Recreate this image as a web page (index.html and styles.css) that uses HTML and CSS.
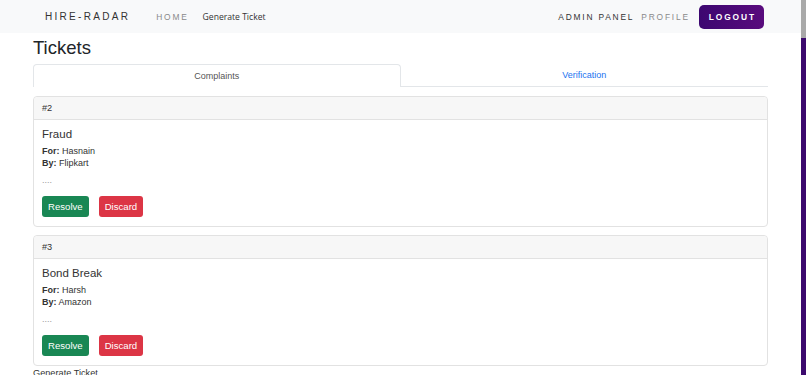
FILE: index.html
```html
<!DOCTYPE html>
<html lang="en">
<head>
<meta charset="utf-8">
<title>Hire-Radar Tickets</title>
<link rel="stylesheet" href="styles.css">
</head>
<body>
<div class="page">
  <nav class="navbar">
    <div class="nav-left">
      <span class="brand">HIRE-RADAR</span>
      <a class="nav-link muted">HOME</a>
      <a class="plain-link">Generate Ticket</a>
    </div>
    <div class="nav-right">
      <a class="nav-link">ADMIN PANEL</a>
      <a class="nav-link muted">PROFILE</a>
      <button class="logout">LOGOUT</button>
    </div>
  </nav>
  <main class="container">
    <h2 class="page-title">Tickets</h2>
    <div class="tabs">
      <div class="tab active">Complaints</div>
      <div class="tab">Verification</div>
    </div>
    <div class="card">
      <div class="card-header">#2</div>
      <div class="card-body">
        <h5 class="card-title">Fraud</h5>
        <p class="meta"><b>For:</b> Hasnain<br><b>By:</b> Flipkart</p>
        <p class="desc">....</p>
        <div class="actions">
          <button class="btn btn-green">Resolve</button>
          <button class="btn btn-red">Discard</button>
        </div>
      </div>
    </div>
    <div class="card">
      <div class="card-header">#3</div>
      <div class="card-body">
        <h5 class="card-title">Bond Break</h5>
        <p class="meta"><b>For:</b> Harsh<br><b>By:</b> Amazon</p>
        <p class="desc">....</p>
        <div class="actions">
          <button class="btn btn-green">Resolve</button>
          <button class="btn btn-red">Discard</button>
        </div>
      </div>
    </div>
    <section class="generate">
      <div class="generate-title">Generate Ticket</div>
    </section>
  </main>
</div>
<div class="scrollbar" aria-hidden="true">
  <div class="scroll-thumb"></div>
  <div class="scroll-track"></div>
</div>
</body>
</html>
```
FILE: styles.css
```css
html, body {
  height: 100%;
}
body {
  margin: 0;
  display: flex;
  overflow: hidden;
  font-family: "Liberation Sans", Arial, sans-serif;
  color: #212529;
  background: #fff;
}
.page {
  flex: 1;
  min-width: 0;
  overflow: hidden;
}
.scrollbar {
  width: 5px;
  flex: none;
  display: flex;
  flex-direction: column;
}
.scroll-thumb {
  height: 38px;
  background: #a9a9a9;
}
.scroll-track {
  flex: 1;
  background: #3c0a6e;
}
.navbar {
  height: 33px;
  background: #f8f9fa;
  display: flex;
  align-items: center;
  justify-content: space-between;
  padding: 0 37px 0 45px;
  box-sizing: border-box;
}
.nav-left, .nav-right {
  display: flex;
  align-items: center;
}
.brand {
  font-size: 10px;
  letter-spacing: 2.3px;
  color: #333;
  margin-right: 26px;
}
.nav-link {
  font-size: 8.4px;
  letter-spacing: 1.8px;
  color: #333;
  margin-right: 14px;
}
.nav-link.muted {
  color: #8a8a8a;
}
.nav-right .nav-link {
  margin-right: 7px;
}
.nav-right .nav-link.muted {
  margin-right: 9px;
}
.plain-link {
  font-family: "Open Sans", sans-serif;
  font-size: 8.6px;
  color: #333;
}
.logout {
  height: 24px;
  padding: 0 8px 0 10px;
  border: none;
  border-radius: 5px;
  background: linear-gradient(90deg, #3c0770, #590b7d);
  color: #fff;
  font-family: "Liberation Sans", Arial, sans-serif;
  font-size: 8.4px;
  letter-spacing: 1.9px;
  font-weight: bold;
}
.container {
  margin: 0 33px;
}
.page-title {
  margin: 3px 0 5px;
  font-size: 18.5px;
  line-height: 23px;
  font-weight: 400;
}
.tabs {
  display: grid;
  grid-template-columns: 1fr 1fr;
  height: 23px;
  margin-bottom: 9px;
}
.tab {
  display: flex;
  align-items: center;
  justify-content: center;
  font-size: 9px;
  color: #1a73f0;
  border-bottom: 1px solid #e3e6e9;
}
.tab.active {
  color: #555;
  border: 1px solid #e3e6e9;
  border-bottom: none;
  border-radius: 4px 4px 0 0;
}
.card {
  border: 1px solid #e2e2e2;
  border-radius: 4px;
  margin-bottom: 8px;
}
.card-header {
  height: 22px;
  display: flex;
  align-items: center;
  padding: 0 8px;
  background: #f7f7f7;
  border-bottom: 1px solid #e2e2e2;
  border-radius: 4px 4px 0 0;
  font-size: 9.2px;
  color: #333;
}
.card-body {
  padding: 7px 8px 8.5px;
}
.card-title {
  margin: 0 0 5px;
  font-size: 11.5px;
  line-height: 14.4px;
  font-weight: 400;
  color: #333;
}
.meta {
  margin: 0;
  font-size: 9px;
  line-height: 11.5px;
  color: #333;
}
.desc {
  margin: 6px 0 9.5px;
  font-size: 9px;
  line-height: 11.5px;
  color: #999;
}
.actions {
  display: flex;
  gap: 10px;
}
.btn {
  height: 21px;
  padding: 0 6px;
  border: none;
  border-radius: 3px;
  font-family: "Liberation Sans", Arial, sans-serif;
  font-size: 9.6px;
  color: #fff;
}
.btn-green {
  background: #198754;
}
.btn-red {
  background: #dc3545;
}
.generate {
  min-height: 400px;
}
.generate-title {
  margin-top: -7px;
  font-size: 9.2px;
  line-height: 12px;
  color: #333;
}
```
